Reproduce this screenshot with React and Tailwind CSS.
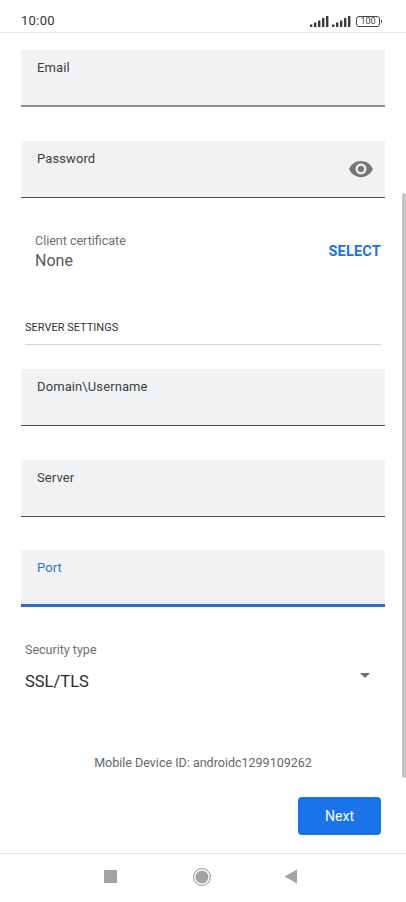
function Field({ label, active, muted, children }) {
    return (
        <div
            className={`relative h-[57px] bg-[#f1f2f4] px-[16px] pt-[9px] ${
                active
                    ? "border-b-[3px] border-[#2a6fc9]"
                    : muted
                      ? "border-b-2 border-[#8c8d8f]"
                      : "border-b border-[#4f5153]"
            }`}
        >
            <div className={`text-[13px] leading-[18px] tracking-[0.1px] ${active ? "text-[#2f74c8]" : "text-[#3c3f42]"}`}>
                {label}
            </div>
            {children}
        </div>
    );
}

function Signal() {
    return (
        <svg width="19" height="11" viewBox="0 0 19 11" fill="#3a3a3a">
            <rect x="0" y="8.5" width="2.4" height="2.5" />
            <rect x="4" y="6.5" width="2.4" height="4.5" />
            <rect x="8" y="4.5" width="2.4" height="6.5" />
            <rect x="12" y="2" width="2.4" height="9" />
            <rect x="16" y="0" width="2.4" height="11" />
        </svg>
    );
}

export default function App() {
    return (
        <div className="relative w-[406px] h-[902px] overflow-hidden bg-white font-['Roboto',sans-serif]">
            {/* status bar */}
            <div className="h-[33px] flex items-center justify-between pl-[21px] pr-[24px] border-b border-[#e8e8e8] pt-[10px]">
                <span className="text-[13px] text-[#333] tracking-[0.3px]">10:00</span>
                <div className="flex items-center">
                    <Signal />
                    <span className="ml-[3px]" />
                    <Signal />
                    <span className="ml-[5px] w-[24px] h-[11px] rounded-[3px] border border-[#444] text-[9px] leading-[9px] text-center text-[#444]">
                        100
                    </span>
                    <span className="ml-[1px] w-[1px] h-[3px] bg-[#444]" />
                </div>
            </div>

            <div className="px-[21px] pt-[17px]">
                <Field label="Email" muted />
                <div className="mt-[34px]">
                    <Field label="Password">
                        <svg className="absolute right-[11px] top-[15px]" width="26" height="26" viewBox="0 0 24 24" fill="#757678">
                            <path d="M12 4.5C7 4.5 2.73 7.61 1 12c1.73 4.39 6 7.5 11 7.5s9.27-3.11 11-7.5c-1.73-4.39-6-7.5-11-7.5zM12 17c-2.76 0-5-2.24-5-5s2.24-5 5-5 5 2.24 5 5-2.24 5-5 5zm0-8c-1.66 0-3 1.34-3 3s1.34 3 3 3 3-1.34 3-3-1.34-3-3-3z" />
                        </svg>
                    </Field>
                </div>

                <div className="mt-[33px] pl-[14px] pr-[4px] flex items-center justify-between h-[44px]">
                    <div>
                        <div className="text-[12.5px] leading-[16px] text-[#6d6f72]">Client certificate</div>
                        <div className="text-[16px] leading-[24px] text-[#57595c]">None</div>
                    </div>
                    <span className="-mt-[2px] text-[14.5px] tracking-[0.2px] font-bold text-[#1a73e8]">SELECT</span>
                </div>

                <div className="mt-[44px] mx-[4px] h-[26px] border-b border-[#d2d3d5] text-[11px] leading-[18px] text-[#333]">
                    SERVER SETTINGS
                </div>

                <div className="mt-[24px]">
                    <Field label="Domain\Username" />
                </div>
                <div className="mt-[34px]">
                    <Field label="Server" />
                </div>
                <div className="mt-[33px]">
                    <Field label="Port" active />
                </div>

                <div className="relative mt-[35px] mx-[4px]">
                    <div className="text-[12.5px] leading-[16px] text-[#6d6f72]">Security type</div>
                    <div className="mt-[12px] text-[16.5px] leading-[24px] text-[#2b2b2b]">SSL/TLS</div>
                    <span className="absolute right-[11px] top-[31px] w-0 h-0 border-x-[5.5px] border-x-transparent border-t-[5px] border-t-[#6f6f6f]" />
                </div>

                <div className="mt-[60px] text-center text-[12.5px] leading-[18px] text-[#66686b]">
                    Mobile Device ID: androidc1299109262
                </div>

                <div className="mt-[25px] flex justify-end pr-[4px]">
                    <button className="w-[83px] h-[38px] rounded-[4px] bg-[#1a73e8] text-white text-[14px]">Next</button>
                </div>
            </div>

            {/* nav bar */}
            <div className="mt-[18px] h-[49px] border-t border-[#e4e4e4] flex items-start pt-[16px]">
                <div className="ml-[104px] w-[13px] h-[13px] bg-[#a3a3a3]" />
                <div className="ml-[76px] -mt-[2px] w-[18px] h-[18px] rounded-full border border-[#a3a3a3] bg-[#a3a3a3] shadow-[inset_0_0_0_1.5px_#fff]" />
                <svg className="ml-[73px] -mt-[1px]" width="14" height="15" viewBox="0 0 14 15" fill="#a3a3a3">
                    <path d="M13 0.5V14.5L0.5 7.5Z" />
                </svg>
            </div>

            {/* scrollbar */}
            <div className="absolute right-0 top-[193px] w-[4px] h-[585px] rounded-[2px] bg-[#c4c4c4]" />
        </div>
    );
}
